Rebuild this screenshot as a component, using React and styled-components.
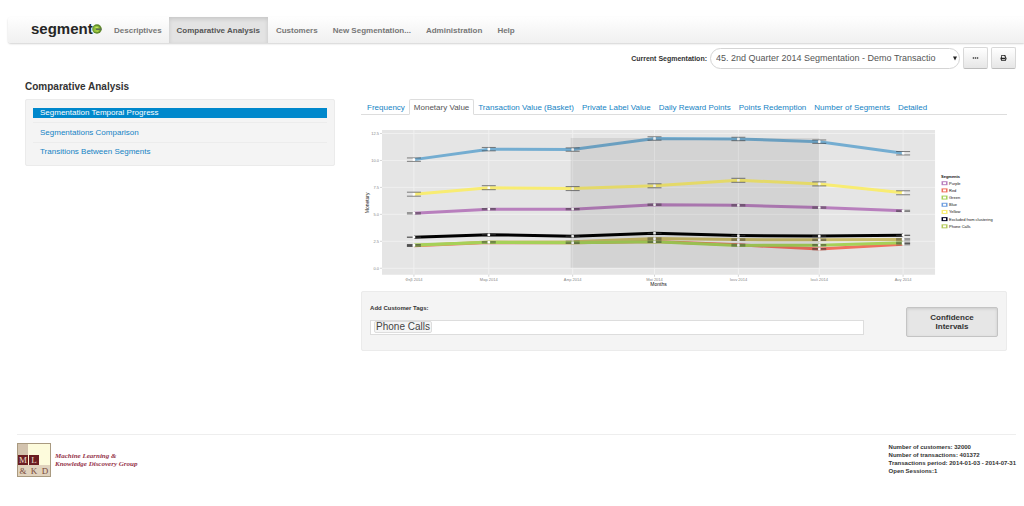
import React from "react";
import styled, { createGlobalStyle, css } from "styled-components";
import { FaEllipsisH, FaPrint } from "react-icons/fa";

const GlobalStyle = createGlobalStyle`
  *, *::before, *::after { box-sizing: border-box; }
  body {
    margin: 0;
    background: #fff;
    color: #333;
    font-family: "Liberation Sans", Arial, sans-serif;
    font-size: 8px;
  }
`;

const Page = styled.div`
  padding-top: 17px;
`;

const NavBar = styled.header`
  display: flex;
  align-items: stretch;
  height: 26px;
  margin-left: 8px;
  padding-left: 23px;
  background: linear-gradient(#fefefe, #f0f0f0);
  border-radius: 3px 0 0 3px;
  box-shadow: 0 1px 2px rgba(0, 0, 0, 0.18);
`;

const Brand = styled.a`
  display: flex;
  align-items: center;
  width: 75px;
  padding-bottom: 2px;
  color: #262626;
  font-size: 15px;
  line-height: 20px;
  font-weight: bold;
  text-decoration: none;

  svg {
    width: 10px;
    height: 10px;
    margin-left: -1px;
    flex: none;
  }
`;

const NavList = styled.nav`
  display: flex;
`;

const NavLink = styled.a`
  display: flex;
  align-items: center;
  padding: 1px 7px 0 8px;
  color: #777;
  font-weight: bold;
  text-decoration: none;
  white-space: nowrap;
  ${(p) =>
    p.$active &&
    css`
      padding: 1px 8px 0;
      color: #555;
      background: #e3e3e3;
      box-shadow: inset 0 2px 4px rgba(0, 0, 0, 0.13);
    `}
`;

const Toolbar = styled.div`
  display: flex;
  justify-content: flex-end;
  align-items: center;
  gap: 3px;
  padding: 4px 8px 0 0;
`;

const ToolbarLabel = styled.label`
  font-size: 7px;
  font-weight: bold;
`;

const SelectWrap = styled.div`
  display: grid;
  align-items: center;
  width: 250px;

  > * { grid-area: 1 / 1; }

  svg {
    justify-self: end;
    width: 4px;
    height: 5px;
    margin-right: 3px;
    pointer-events: none;
  }
`;

const Select = styled.select`
  appearance: none;
  width: 100%;
  height: 21px;
  padding: 0 12px 0 5px;
  border: 1px solid #d4d4d4;
  border-radius: 11px;
  background: #fff;
  color: #555;
  font: 9px "Liberation Sans", Arial, sans-serif;
`;

const IconButton = styled.button`
  display: flex;
  align-items: center;
  justify-content: center;
  width: 25px;
  height: 22px;
  padding: 0;
  border: 1px solid #d8d8d8;
  border-bottom-color: #bcbcbc;
  border-radius: 2px;
  background: linear-gradient(#fff, #e6e6e6);
  color: #222;

  svg { width: 7px; height: 6px; }
`;

const Title = styled.h1`
  margin: 12px 0 6px 25px;
  font-size: 10px;
  line-height: 12px;
`;

const Columns = styled.div`
  display: grid;
  grid-template-columns: 12fr 25fr;
  gap: 26px;
  align-items: start;
  padding: 0 17px 0 25px;
`;

const Well = styled.section`
  border: 1px solid #ebebeb;
  border-radius: 2px;
  background: #f4f4f4;
`;

const SideList = styled.ul`
  margin: 0;
  padding: 8px 7px;
  list-style: none;
`;

const SideItem = styled.li`
  & + & {
    margin-top: 4px;
    padding-top: 5px;
    border-top: 1px solid #ececec;
  }

  & + & + & {
    padding-top: 4px;
  }
`;

const SideLink = styled.a`
  display: block;
  padding: 0 7px;
  line-height: 10px;
  text-decoration: none;
  color: ${(p) => (p.$active ? "#fff" : "#1583c4")};
  background: ${(p) => (p.$active ? "#0088cc" : "transparent")};
`;

const Tabs = styled.nav`
  display: flex;
  height: 16px;
  padding-left: 2px;
  border-bottom: 1px solid #ddd;
`;

const Tab = styled.a`
  height: 16px;
  padding: 0 3px;
  border: 1px solid transparent;
  border-radius: 2px 2px 0 0;
  color: #1583c4;
  line-height: 15px;
  text-decoration: none;
  white-space: nowrap;
  ${(p) =>
    p.$active &&
    css`
      padding: 0 4px;
      border-color: #ddd #ddd #fff;
      background: #fff;
      color: #555;
    `}
`;

const Chart = styled.svg`
  display: block;
  width: 100%;
  margin-top: 9px;
  font-family: "Liberation Sans", Arial, sans-serif;
`;

const TagWell = styled(Well)`
  display: flex;
  align-items: flex-start;
  justify-content: space-between;
  gap: 42px;
  height: 60px;
  padding: 12px 8px 0;
`;

const TagGroup = styled.div`
  flex: 1;
  padding-bottom: 8px;
`;

const TagLabel = styled.label`
  display: block;
  font-size: 6px;
  font-weight: bold;
  line-height: 8px;
`;

const TagField = styled.div`
  display: flex;
  align-items: center;
  height: 15px;
  margin-top: 8px;
  padding: 0 3px;
  border: 1px solid #ddd;
  background: #fff;
`;

const Tag = styled.span`
  padding: 0 1px;
  border: 1px solid #ddd;
  border-radius: 2px;
  background: #f5f5f5;
  color: #444;
  font-size: 10px;
  line-height: 10px;
`;

const TagInput = styled.input`
  flex: 1;
  min-width: 0;
  height: 11px;
  padding: 0 2px;
  border: 0;
  outline: 0;
  background: transparent;
  font: 10px "Liberation Sans", Arial, sans-serif;
`;

const ToggleButton = styled.button`
  width: 92px;
  height: 30px;
  margin-top: 3px;
  padding: 1px 20px 0;
  border: 1px solid #c4c4c4;
  border-radius: 2px;
  background: #e6e6e6;
  box-shadow: inset 0 1px 3px rgba(0, 0, 0, 0.12);
  color: #333;
  font: bold 8px/9px "Liberation Sans", Arial, sans-serif;
`;

const Footer = styled.footer`
  display: flex;
  justify-content: space-between;
  margin: 83px 8px 0 17px;
  padding-top: 8px;
  border-top: 1px solid #eee;
`;

const Group = styled.a`
  display: flex;
  align-items: center;
  gap: 4px;
  color: #96344a;
  font: italic bold 7px/8px "Liberation Serif", serif;
  text-decoration: none;

  svg { width: 34px; height: 34px; }
`;

const Stats = styled.div`
  font-size: 6px;
  line-height: 8px;
  font-weight: bold;
`;

const navItems = ["Descriptives", "Comparative Analysis", "Customers", "New Segmentation...", "Administration", "Help"];
const sideItems = ["Segmentation Temporal Progress", "Segmentations Comparison", "Transitions Between Segments"];
const tabs = [
  "Frequency",
  "Monetary Value",
  "Transaction Value (Basket)",
  "Private Label Value",
  "Daily Reward Points",
  "Points Redemption",
  "Number of Segments",
  "Detailed",
];

const months = [
  { name: "Φεβ 2014", x: 53 },
  { name: "Μαρ 2014", x: 128 },
  { name: "Απρ 2014", x: 212 },
  { name: "Μαϊ 2014", x: 294 },
  { name: "Ιουν 2014", x: 378 },
  { name: "Ιουλ 2014", x: 459 },
  { name: "Αυγ 2014", x: 543 },
];
const ticks = [0, 2.5, 5, 7.5, 10, 12.5];
const scaleY = (v) => 144.5 - v * 10.8;

const series = [
  { color: "#f0705e", spread: 0.6, ys: [122, 118.8, 119, 117.6, 121, 125.3, 120.4] },
  { color: "#c9bb67", spread: 0.6, ys: [121.8, 118.3, 118, 114.8, 115.8, 116, 115.6] },
  { color: "#a6d158", spread: 0.6, ys: [121.3, 118.5, 119, 118, 121.6, 121.4, 119] },
  { color: "#b87fbd", spread: 0.6, ys: [89.5, 85.3, 85.3, 80.8, 81.5, 83.7, 87] },
  { color: "#74add1", spread: 1.7, ys: [35.7, 25.2, 25.6, 14.5, 15, 17.7, 29.3] },
  { color: "#f8ec72", spread: 2, ys: [70.3, 63.8, 64.7, 61.9, 56.4, 60, 68.9] },
  { color: "#000000", spread: 0.2, ys: [113.4, 110.9, 112.4, 109.5, 111.8, 112.3, 111.5] },
];

const bandTop = series[1].ys;
const bandBottom = series[2].ys;
const band = [
  ...bandTop.slice(0, 4).map((y, i) => `${months[i].x},${y}`),
  ...bandBottom.slice(0, 4).map((y, i) => `${months[i].x},${y}`).reverse(),
].join(" ");

const legend = [
  ["Purple", "#b87fbd"],
  ["Red", "#f0705e"],
  ["Green", "#a6d158"],
  ["Blue", "#6f9fe0"],
  ["Yellow", "#f8ec72"],
  ["Excluded from clustering", "#000022"],
  ["Phone Calls", "#b5c95c"],
];

function MonetaryChart() {
  return (
    <Chart viewBox="0 0 647 167" role="img" aria-label="Monetary value per segment by month">
      <rect x="21" y="6" width="554" height="145" fill="#e5e5e5" />
      {ticks.map((t) => (
        <g key={t}>
          <line x1="21" x2="575" y1={scaleY(t)} y2={scaleY(t)} stroke="#f0f0f0" />
          <line x1="19" x2="21" y1={scaleY(t)} y2={scaleY(t)} stroke="#aaa" strokeWidth="0.5" />
          <text x="18" y={scaleY(t) + 1.4} fontSize="4" fill="#888" textAnchor="end">{t.toFixed(1)}</text>
        </g>
      ))}
      {months.map((m) => (
        <g key={m.name}>
          <line x1={m.x} x2={m.x} y1="6" y2="151" stroke="#f0f0f0" />
          <line x1={m.x} x2={m.x} y1="151" y2="153" stroke="#aaa" strokeWidth="0.5" />
          <text x={m.x} y="157" fontSize="4" fill="#888" textAnchor="middle">{m.name}</text>
        </g>
      ))}
      <polygon points={band} fill="#bfc263" />
      {series.map((s) => (
        <g key={s.color}>
          <polyline
            points={s.ys.map((y, i) => `${months[i].x},${y}`).join(" ")}
            fill="none"
            stroke={s.color}
            strokeWidth="3"
          />
          {s.ys.map((y, i) => {
            const x = months[i].x;
            return (
              <g key={x}>
                <path
                  d={`M${x - 7} ${y - s.spread}h14M${x - 7} ${y + s.spread}h14`}
                  stroke="#333"
                  strokeOpacity="0.75"
                  strokeWidth="0.8"
                />
                <rect x={x - 1.3} y={y - 1.3} width="2.6" height="2.6" rx="0.6" fill="#fff" />
              </g>
            );
          })}
        </g>
      ))}
      <rect x="210" y="14" width="249" height="130" fill="#000" fillOpacity="0.08" />
      <text transform="translate(8 79) rotate(-90)" fontSize="5" fill="#111" textAnchor="middle">Monetary</text>
      <text x="298" y="162" fontSize="5" fill="#111" textAnchor="middle">Months</text>
      <text x="581" y="54" fontSize="4" fontWeight="bold" fill="#111">Segments</text>
      {legend.map(([name, color], i) => (
        <g key={name} transform={`translate(582 ${59.3 + i * 7.2})`}>
          <rect x="-0.5" y="-2" width="6" height="4" fill={color} />
          <rect x="1" y="-1" width="3" height="2" fill="#fff" />
          <text x="7" y="1.4" fontSize="4" fill="#111">{name}</text>
        </g>
      ))}
    </Chart>
  );
}

function BrandMark() {
  return (
    <svg viewBox="0 0 20 20" aria-hidden="true">
      <circle cx="10" cy="10" r="9.5" fill="#5f8a2a" />
      <circle cx="9" cy="10" r="6.5" fill="#8fbf3a" />
      <path d="M5 8 L10 5 L13 8 Z" fill="#c9e56a" />
      <path d="M8 9h11v3H8z" fill="#5d6f55" />
      <path d="M6 13h8l-3 3z" fill="#b5d84f" />
    </svg>
  );
}

function GroupLogo() {
  return (
    <svg viewBox="0 0 34 34" aria-hidden="true" fontFamily="Liberation Serif, serif" fontStyle="normal" fontWeight="normal">
      <rect width="34" height="34" fill="#a99a80" />
      <rect x="1" y="1" width="10" height="11" fill="#d3c3ae" />
      <rect x="11" y="1" width="22" height="21" fill="#fdfbdc" />
      <rect x="1" y="12" width="10" height="10" fill="#6b1d22" />
      <rect x="12" y="12" width="10" height="10" fill="#6b1d22" />
      <rect x="1" y="22" width="32" height="11" fill="#e0d2bd" />
      <g fontSize="9" textAnchor="middle">
        <text x="6" y="20" fill="#eadfce">M</text>
        <text x="17" y="20" fill="#eadfce">L</text>
        <text x="6" y="31" fill="#7a4a3a">&amp;</text>
        <text x="17" y="31" fill="#7a4a3a">K</text>
        <text x="28" y="31" fill="#7a4a3a">D</text>
      </g>
    </svg>
  );
}

export default function App() {
  return (
    <Page>
      <GlobalStyle />
      <NavBar>
        <Brand href="#">
          segment
          <BrandMark />
        </Brand>
        <NavList>
          {navItems.map((item) => (
            <NavLink key={item} href="#" $active={item === "Comparative Analysis"}>{item}</NavLink>
          ))}
        </NavList>
      </NavBar>

      <Toolbar>
        <ToolbarLabel htmlFor="segmentation">Current Segmentation:</ToolbarLabel>
        <SelectWrap>
          <Select id="segmentation">
            <option>45. 2nd Quarter 2014 Segmentation - Demo Transactio</option>
          </Select>
          <svg viewBox="0 0 4 5" aria-hidden="true"><path d="M0 0.5h4L2 4.5z" fill="#222" /></svg>
        </SelectWrap>
        <IconButton aria-label="More"><FaEllipsisH /></IconButton>
        <IconButton aria-label="Print"><FaPrint /></IconButton>
      </Toolbar>

      <Title>Comparative Analysis</Title>

      <Columns>
        <Well>
          <SideList>
            {sideItems.map((item, i) => (
              <SideItem key={item}>
                <SideLink href="#" $active={i === 0}>{item}</SideLink>
              </SideItem>
            ))}
          </SideList>
        </Well>

        <main>
          <Tabs>
            {tabs.map((tab) => (
              <Tab key={tab} href="#" $active={tab === "Monetary Value"}>{tab}</Tab>
            ))}
          </Tabs>
          <MonetaryChart />
          <TagWell>
            <TagGroup>
              <TagLabel htmlFor="tags">Add Customer Tags:</TagLabel>
              <TagField>
                <Tag>Phone Calls</Tag>
                <TagInput id="tags" type="text" />
              </TagField>
            </TagGroup>
            <ToggleButton>Confidence Intervals</ToggleButton>
          </TagWell>
        </main>
      </Columns>

      <Footer>
        <Group href="#">
          <GroupLogo />
          <span>
            Machine Learning &amp;
            <br />
            Knowledge Discovery Group
          </span>
        </Group>
        <Stats>
          <div>Number of customers: 32000</div>
          <div>Number of transactions: 401372</div>
          <div>Transactions period: 2014-01-03 - 2014-07-31</div>
          <div>Open Sessions:1</div>
        </Stats>
      </Footer>
    </Page>
  );
}
